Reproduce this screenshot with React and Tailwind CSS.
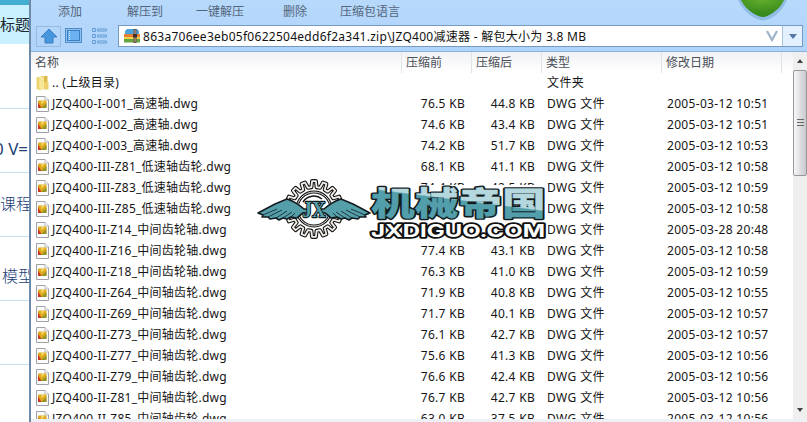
const files = [
  { name: 'JZQ400-I-001_高速轴.dwg', size: '76.5 KB', packed: '44.8 KB', date: '2005-03-12 10:51' },
  { name: 'JZQ400-I-002_高速轴.dwg', size: '74.6 KB', packed: '43.4 KB', date: '2005-03-12 10:51' },
  { name: 'JZQ400-I-003_高速轴.dwg', size: '74.2 KB', packed: '51.7 KB', date: '2005-03-12 10:53' },
  { name: 'JZQ400-III-Z81_低速轴齿轮.dwg', size: '68.1 KB', packed: '41.1 KB', date: '2005-03-12 10:58' },
  { name: 'JZQ400-III-Z83_低速轴齿轮.dwg', size: '74.4 KB', packed: '42.5 KB', date: '2005-03-12 10:59' },
  { name: 'JZQ400-III-Z85_低速轴齿轮.dwg', size: '', packed: '', date: '2005-03-12 10:58' },
  { name: 'JZQ400-II-Z14_中间齿轮轴.dwg', size: '', packed: '', date: '2005-03-28 20:48' },
  { name: 'JZQ400-II-Z16_中间齿轮轴.dwg', size: '77.4 KB', packed: '43.1 KB', date: '2005-03-12 10:58' },
  { name: 'JZQ400-II-Z18_中间齿轮轴.dwg', size: '76.3 KB', packed: '41.0 KB', date: '2005-03-12 10:59' },
  { name: 'JZQ400-II-Z64_中间轴齿轮.dwg', size: '71.9 KB', packed: '40.8 KB', date: '2005-03-12 10:55' },
  { name: 'JZQ400-II-Z69_中间轴齿轮.dwg', size: '71.7 KB', packed: '40.1 KB', date: '2005-03-12 10:57' },
  { name: 'JZQ400-II-Z73_中间轴齿轮.dwg', size: '76.1 KB', packed: '42.7 KB', date: '2005-03-12 10:57' },
  { name: 'JZQ400-II-Z77_中间轴齿轮.dwg', size: '75.6 KB', packed: '41.3 KB', date: '2005-03-12 10:56' },
  { name: 'JZQ400-II-Z79_中间轴齿轮.dwg', size: '76.6 KB', packed: '42.4 KB', date: '2005-03-12 10:56' },
  { name: 'JZQ400-II-Z81_中间轴齿轮.dwg', size: '76.7 KB', packed: '42.7 KB', date: '2005-03-12 10:56' },
  { name: 'JZQ400-II-Z85_中间轴齿轮.dwg', size: '63.0 KB', packed: '37.5 KB', date: '2005-03-12 10:56' },
]

const cols = 'grid grid-cols-[370px_70px_70px_120px_1fr]'

function DwgIcon() {
  return (
    <svg width="13" height="16" viewBox="0 0 13 16" className="shrink-0">
      <path d="M.5.5h8.5l3.5 3.5v11.5H.5z" fill="#fbfbfc" stroke="#a0a0aa" />
      <path d="M9 .5V4h3.5" fill="#fff" stroke="#aaa" strokeWidth=".8" />
      <rect x="2" y="4.500" width="8.500" height="7.500" rx="1" fill="#dfa91c" />
      <path d="M2 6.500 5.500 12H2z" fill="#c9361f" />
      <path d="M5 12 10.500 7v5z" fill="#93952a" />
      <path d="M5 5h4L5.500 8.500z" fill="#f3d560" />
    </svg>
  )
}

function FolderIcon() {
  return (
    <svg width="13" height="16" viewBox="0 0 13 16" className="shrink-0">
      <path d="M.5 2h4v13.500L.5 14z" fill="#edd472" />
      <path d="M5 1h6.500v13H5z" fill="#dcb845" />
      <path d="M3 2.500 8 1v13l-4.500 1.500z" fill="#f6e69a" />
      <path d="M8 7h4.500v7.500H8z" fill="#ecd06c" />
    </svg>
  )
}

function ZipIcon() {
  return (
    <svg width="16" height="14" viewBox="0 0 16 14">
      <path d="M1 2 3 0h10l2 2v3H1z" fill="#4aa3dc" />
      <path d="M0 5h16v3H0z" fill="#e5823a" />
      <path d="M0 8h16v2H0z" fill="#f2d04e" />
      <path d="M0 10h16v3.500H0z" fill="#63a641" />
      <path d="M9.500 0h3v14h-3z" fill="#6b5346" />
      <path d="M10.500 1h1v12h-1z" fill="#b9a38d" />
      <rect x="9" y="5" width="4" height="3.500" fill="#42312b" />
    </svg>
  )
}

const TEETH = 16
const gearPoints = Array.from({ length: TEETH }, (_, i) =>
  [[-0.3, 22], [-0.17, 28], [0.17, 28], [0.3, 22]].map(([t, r]) => {
    const a = ((i + t) / TEETH) * Math.PI * 2
    return `${(r * Math.sin(a)).toFixed(1)},${(-r * Math.cos(a)).toFixed(1)}`
  }).join(' ')
).join(' ')

function Gear() {
  return (
    <g transform="translate(58 31)" strokeLinejoin="round">
      <polygon points={gearPoints} fill="#fff" stroke="#151515" strokeWidth="4" />
      <polygon points={gearPoints} fill="none" stroke="#f1ece8" strokeWidth="1.800" />
      <circle r="17" fill="#fff" stroke="#151515" strokeWidth="3" />
      <circle r="17" fill="none" stroke="#e9e3df" strokeWidth="1" />
      <path d="M-11-7A13 13 0 0 1 8-10" fill="none" stroke="#151515" strokeWidth="1.500" />
    </g>
  )
}

function Wing() {
  return (
    <g stroke="#131c20" strokeLinejoin="round">
      <path d="M2 35 19 26 31 21Q40 24 48 31H52V35H47Q43 38 41 40L35 39 31 41 27 40 23 42 20 40 14 41 12 39 6 39 7 37z" fill="#559fab" strokeWidth="1.600" />
      <path d="m7 37 14-6M12 39l14-7M20 40l11-7M27 40l9-6M35 39l4-4" fill="none" strokeWidth=".8" />
    </g>
  )
}

function Watermark() {
  return (
    <svg width="294" height="66" viewBox="0 0 294 66" className="absolute left-[256px] top-[178px]">
      <defs>
        <linearGradient id="ink" gradientUnits="userSpaceOnUse" x1="78.300" y1="0" x2="69.700" y2="50">
          <stop offset=".49" stopColor="#b5d8de" />
          <stop offset=".52" stopColor="#529eaa" />
        </linearGradient>
      </defs>
      <rect x="114" y="7" width="178" height="55" fill="#fff" />
      <Gear />
      <Wing />
      <g transform="translate(116 0) scale(-1 1)"><Wing /></g>
      <text x="58" y="39" textAnchor="middle" className="font-['Liberation_Serif',serif] text-[24px] font-bold" fill="#559fab" stroke="#131c20" strokeWidth="2.500" strokeLinejoin="round" paintOrder="stroke" textLength="23" lengthAdjust="spacingAndGlyphs">JX</text>
      <g transform="translate(115 0) scale(1.180 .87)" className="font-['Noto_Sans_CJK_SC',sans-serif] text-[37px] font-black" strokeLinejoin="round">
        <text x="0" y="42.500" fill="#111b1e" stroke="#111b1e" strokeWidth="3.600">机械帝国</text>
        <text x="0" y="42.500" fill="url(#ink)" stroke="url(#ink)" strokeWidth=".4">机械帝国</text>
      </g>
      <text x="115" y="58.500" className="font-['Inter',sans-serif] text-[18px] font-bold" fill="#fff" stroke="#111" strokeWidth="3.500" strokeLinejoin="round" paintOrder="stroke" textLength="174" lengthAdjust="spacingAndGlyphs">JXDIGUO.COM</text>
    </svg>
  )
}

function Row({ icon, name, size, packed, type, date }) {
  return (
    <div className={`${cols} h-[21px] shrink-0 items-center whitespace-nowrap`}>
      <div className="flex items-center gap-[3px] pl-[5px] tracking-[0.25px]">{icon}<span>{name}</span></div>
      <span className="pr-[6px] text-right tracking-[0.3px]">{size}</span>
      <span className="pr-[6px] text-right tracking-[0.3px]">{packed}</span>
      <span className="pl-[6px] tracking-[0.4px]">{type}</span>
      <span className="pl-[6px] tracking-[0.32px]">{date}</span>
    </div>
  )
}

function Toolbar() {
  return (
    <div className="h-[52px] shrink-0 border-b border-[#8db2dd] bg-linear-to-b from-[#b7d9fb] to-[#b0d3fa]">
      <div className="flex h-[22px] items-center text-[#53657a]">
        <span className="ml-[27px] w-[69px]">添加</span>
        <span className="w-[69px]">解压到</span>
        <span className="w-[87px]">一键解压</span>
        <span className="w-[57px]">删除</span>
        <span>压缩包语言</span>
      </div>
      <div className="mt-[3px] flex h-[22px] items-center pl-[5px] pr-[4px]">
        <span className="flex h-[21px] w-[25px] items-center justify-center border border-[#98badb]">
          <svg width="18" height="16" viewBox="0 0 18 16"><path d="m9 1 8 8h-4v6H5V9H1z" fill="#4796de" stroke="#3a7fc2" /></svg>
        </span>
        <svg width="17" height="16" viewBox="0 0 17 16" className="ml-1">
          <rect x=".5" y=".5" width="16" height="14" fill="#8fc0f0" stroke="#4e8cc8" />
          <rect x="2.500" y="2.500" width="12" height="10" fill="#6cb2f0" stroke="#3c7fc0" />
          <path d="M4.500 3v9" stroke="#d2e8fb" strokeDasharray="1 1" />
        </svg>
        <svg width="15" height="16" viewBox="0 0 15 16" className="ml-[10px]" fill="#a9d2f8" stroke="#659dd4">
          <path d="M.5.500h3v3h-3zM5.500 1h9v2h-9zM.5 6.500h3v3h-3zM5.500 7h9v2h-9zM.5 12.500h3v3h-3zM5.500 13h9v2h-9z" />
        </svg>
        <div className="ml-[11px] flex h-[22px] flex-1 items-center border border-[#759bc4] bg-white pl-[5px] text-[#111]">
          <ZipIcon />
          <span className="ml-[3px] flex-1 whitespace-nowrap tracking-[0.27px]">863a706ee3eb05f0622504edd6f2a341.zip\JZQ400减速器 - 解包大小为 3.8 MB</span>
          <svg width="12" height="12" viewBox="0 0 12 12" className="mr-1"><path d="m1 1 5 9 5-9" fill="none" stroke="#9db3c8" strokeWidth="2.200" /></svg>
          <span className="flex h-full w-[20px] items-center justify-center border-l border-[#a8c4e2] bg-[#e3f0fd]">
            <svg width="8" height="5"><path d="M0 0h8L4 5z" fill="#5478a4" /></svg>
          </span>
        </div>
      </div>
    </div>
  )
}

function PageBehind() {
  return (
    <div className="h-full w-[29px] shrink-0 overflow-hidden whitespace-nowrap bg-white text-[16px] text-[#233f78]">
      <div className="h-[5px] bg-[#44add2]" />
      <div className="flex h-[39px] items-center bg-[#c8f0ff] text-[15px] text-[#20282e]">标题</div>
      <div className="h-[65px] border-b border-[#c2dfeb]" />
      <div className="flex h-[64px] items-center border-b border-[#c2dfeb] pt-4"><span className="-ml-[6px] text-[17px]">0 V=</span></div>
      <div className="flex h-[64px] items-center border-b border-[#c2dfeb] font-light">课程</div>
      <div className="flex h-[64px] items-center border-b border-[#c2dfeb] pt-4 pl-[2px] font-light">模型</div>
      <div className="h-[64px] border-b border-[#c2dfeb]" />
    </div>
  )
}

export default function App() {
  return (
    <div className="relative flex h-[422px] w-[807px] overflow-hidden bg-white font-['Noto_Sans','Noto_Sans_CJK_SC',sans-serif] text-[12px] leading-[21px] text-[#151515]">
      <PageBehind />
      <div className="flex min-w-0 flex-1 flex-col border-l-2 border-[#6d8ba8]">
        <Toolbar />
        <div className="flex h-[367px]">
          <div className="flex h-full w-[762px] flex-col overflow-hidden">
            <div className={`${cols} h-[20px] shrink-0 items-center bg-linear-to-b from-[#f1f2f4] to-white text-[#4a4e56]`}>
              <span className="pl-1">名称</span>
              <span className="border-l border-[#e1e3e7] pl-1">压缩前</span>
              <span className="border-l border-[#e1e3e7] pl-1">压缩后</span>
              <span className="border-l border-[#e1e3e7] pl-1">类型</span>
              <span className="mr-[11px] border-x border-[#e1e3e7] pl-1">修改日期</span>
            </div>
            <Row icon={<FolderIcon />} name=".. (上级目录)" type="文件夹" />
            {files.map(f => <Row key={f.name} icon={<DwgIcon />} {...f} type="DWG 文件" />)}
          </div>
          <div className="flex flex-1 flex-col items-center bg-[#efeff0]">
            <svg width="8" height="18" viewBox="0 0 8 18"><path d="m1 11 3-4 3 4z" fill="#444" /></svg>
            <div className="flex h-[106px] w-[14px] items-center justify-center rounded-xs border border-[#96989c] bg-linear-to-r from-[#f7f7f8] to-[#c8c9cc]">
              <svg width="7" height="8" viewBox="0 0 7 8"><path d="M0 .5h7M0 3.500h7M0 6.500h7" stroke="#666" /></svg>
            </div>
            <span className="flex-1" />
            <svg width="8" height="17" viewBox="0 0 8 17"><path d="m1 6 3 4 3-4z" fill="#444" /></svg>
          </div>
        </div>
        <div className="flex-1 bg-[#edf0f5]" />
      </div>
      <svg width="52" height="22" viewBox="0 0 52 22" className="absolute left-[737px] top-0">
        <defs>
          <radialGradient id="ball" cx=".5" cy="0" r=".8">
            <stop offset="0" stopColor="#62ad2c" />
            <stop offset="1" stopColor="#36891b" />
          </radialGradient>
        </defs>
        <path d="M1 0Q6 10 13 15 20 20 26 20.500 32 20 39 15 46 9 50 0z" fill="#8fbbe4" />
        <path d="M4 0Q8 8 15 12.500 22 17 26 17 30 17 37 12 44 7 47 0z" fill="url(#ball)" />
      </svg>
      <Watermark />
    </div>
  )
}
